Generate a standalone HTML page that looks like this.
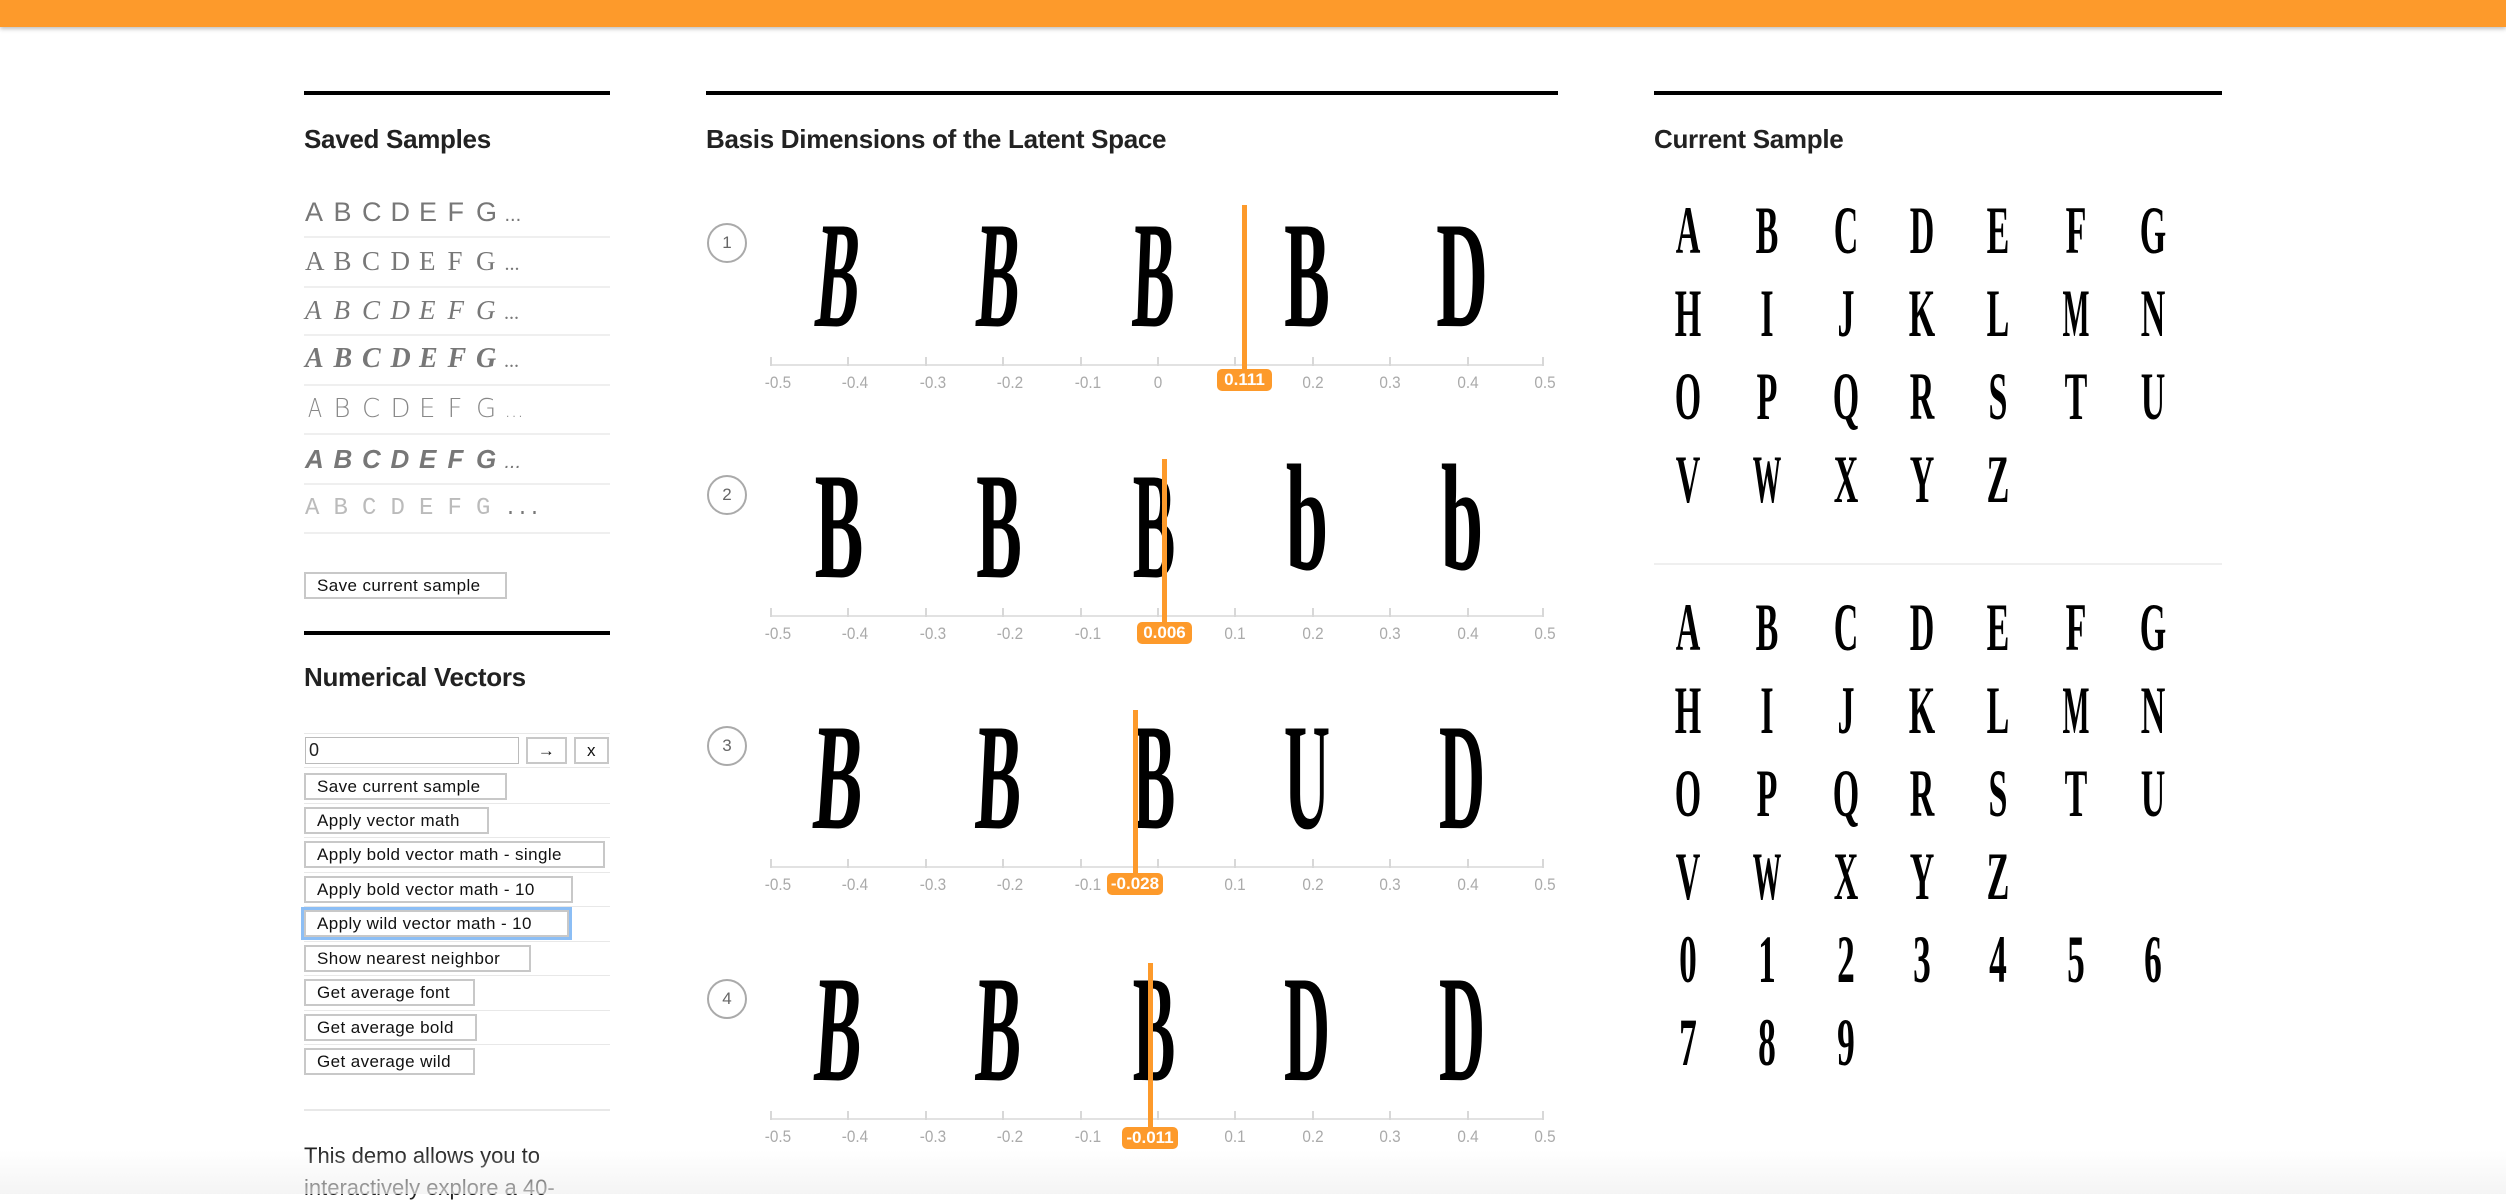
<!DOCTYPE html>
<html><head><meta charset="utf-8"><style>
*{margin:0;padding:0;box-sizing:border-box}
body{width:2506px;height:1194px;background:#fff;position:relative;overflow:hidden;font-family:"Liberation Sans",sans-serif;color:#222}
.abs{position:absolute}
.bar{left:0;top:0;width:2506px;height:27px;background:#fd9a2b;box-shadow:0 2px 4px rgba(0,0,0,.25)}
.rule{height:4px;background:#000}
h2{position:absolute;font-size:26px;font-weight:bold;color:#222;line-height:30px;letter-spacing:-0.3px}
.sep{height:2px;background:#efefef}
.row{position:absolute;left:305px;height:30px;color:#777;font-size:27px;line-height:30px;white-space:nowrap}
.row span{display:inline-block;width:28.5px}
.btn{position:absolute;height:27px;border:2px solid #c8c8c8;background:#fff;font-size:17px;line-height:23px;padding-left:11px;color:#111;letter-spacing:0.4px}
.ln{position:absolute;left:304px;width:306px;height:1px;background:#e8e8e8}
.circ{position:absolute;width:40px;height:40px;border:2px solid #aaa;border-radius:50%;font-size:17px;line-height:36px;text-align:center;color:#666}
.axis{position:absolute;left:770px;width:774px;height:2px;background:#e2e2e2}
.tick{position:absolute;width:2px;height:9px;background:#d8d8d8}
.tl{position:absolute;width:60px;text-align:center;font-size:17px;color:#aaa;transform:scaleX(.9)}
.g{position:absolute;width:200px;text-align:center;font-family:"Liberation Serif",serif;font-weight:bold;color:#000;line-height:1}
.c{font-size:68px;margin-top:-5px}
.mk{position:absolute;width:5px;background:#fd9a2b}
.lab{position:absolute;height:22px;background:#fd9a2b;border-radius:5px;color:#fff;font-weight:bold;font-size:17px;line-height:22px;text-align:center}
.fade{left:0;top:1150px;width:2506px;height:44px;background:linear-gradient(rgba(240,240,240,0),rgba(240,240,240,.7))}
</style></head><body>
<div class="abs bar"></div>

<div class="abs rule" style="left:304px;top:91px;width:306px"></div>
<h2 style="left:304px;top:124px">Saved Samples</h2>
<div class="row" style="top:197px;font-family:'Liberation Sans';font-weight:normal"><span>A</span><span>B</span><span>C</span><span>D</span><span>E</span><span>F</span><span>G</span><span style="font-size:20px">...</span></div>
<div class="sep abs" style="left:304px;top:236px;width:306px"></div>
<div class="row" style="top:246px;font-family:'Liberation Serif'"><span>A</span><span>B</span><span>C</span><span>D</span><span>E</span><span>F</span><span>G</span><span style="font-size:20px">...</span></div>
<div class="sep abs" style="left:304px;top:286px;width:306px"></div>
<div class="row" style="top:295px;font-family:'Liberation Serif';font-style:italic"><span>A</span><span>B</span><span>C</span><span>D</span><span>E</span><span>F</span><span>G</span><span style="font-size:20px">...</span></div>
<div class="sep abs" style="left:304px;top:334px;width:306px"></div>
<div class="row" style="top:344px;font-family:'Liberation Serif';font-style:italic;font-weight:bold;font-size:28px"><span>A</span><span>B</span><span>C</span><span>D</span><span>E</span><span>F</span><span>G</span><span style="font-size:20px;font-weight:normal">...</span></div>
<div class="sep abs" style="left:304px;top:384px;width:306px"></div>
<div class="row" style="top:394px;font-family:'DejaVu Sans';font-weight:200;color:#888;font-size:26px"><span style="transform:scaleX(.8)">A</span><span>B</span><span>C</span><span>D</span><span>E</span><span>F</span><span>G</span><span style="font-size:20px">...</span></div>
<div class="sep abs" style="left:304px;top:433px;width:306px"></div>
<div class="row" style="top:444px;font-family:'Liberation Sans';font-style:italic;font-weight:bold;font-size:26px"><span>A</span><span>B</span><span>C</span><span>D</span><span>E</span><span>F</span><span>G</span><span style="font-size:20px;font-weight:normal">...</span></div>
<div class="sep abs" style="left:304px;top:483px;width:306px"></div>
<div class="row" style="top:494px;font-family:'Liberation Mono';color:#bbb;font-size:24px"><span>A</span><span>B</span><span>C</span><span>D</span><span>E</span><span>F</span><span>G</span><span style="font-size:20px;color:#777">...</span></div>
<div class="sep abs" style="left:304px;top:532px;width:306px"></div>
<div class="btn" style="left:304px;top:572px;width:203px">Save current sample</div>

<div class="abs rule" style="left:304px;top:631px;width:306px"></div>
<h2 style="left:304px;top:662px">Numerical Vectors</h2>
<div class="ln" style="top:733px"></div>
<div class="abs" style="left:305px;top:737px;width:214px;height:27px;border:1px solid #bbb;font-size:18px;line-height:25px;padding-left:3px">0</div>
<div class="btn" style="left:526px;top:737px;width:41px;padding:0;text-align:center">→</div>
<div class="btn" style="left:574px;top:737px;width:35px;padding:0;text-align:center">x</div>
<div class="ln" style="top:767px"></div>
<div class="btn" style="left:304px;top:773px;width:203px">Save current sample</div>
<div class="ln" style="top:803px"></div>
<div class="btn" style="left:304px;top:807px;width:185px">Apply vector math</div>
<div class="ln" style="top:837px"></div>
<div class="btn" style="left:304px;top:841px;width:301px">Apply bold vector math - single</div>
<div class="ln" style="top:872px"></div>
<div class="btn" style="left:304px;top:876px;width:269px">Apply bold vector math - 10</div>
<div class="ln" style="top:906px"></div>
<div class="btn" style="left:304px;top:910px;width:265px;box-shadow:0 0 0 3px #8cbef5">Apply wild vector math - 10</div>
<div class="ln" style="top:941px"></div>
<div class="btn" style="left:304px;top:945px;width:227px">Show nearest neighbor</div>
<div class="ln" style="top:975px"></div>
<div class="btn" style="left:304px;top:979px;width:171px">Get average font</div>
<div class="ln" style="top:1010px"></div>
<div class="btn" style="left:304px;top:1014px;width:173px">Get average bold</div>
<div class="ln" style="top:1044px"></div>
<div class="btn" style="left:304px;top:1048px;width:171px">Get average wild</div>
<div class="ln" style="top:1109px;height:2px"></div>
<div class="abs" style="left:304px;top:1140px;font-size:22px;line-height:32px;color:#222">This demo allows you to<br>interactively explore a 40-</div>

<div class="abs rule" style="left:706px;top:91px;width:852px"></div>
<h2 style="left:706px;top:124px">Basis Dimensions of the Latent Space</h2>

<div class="circ" style="left:707px;top:223px">1</div>
<div class="circ" style="left:707px;top:475px">2</div>
<div class="circ" style="left:707px;top:726px">3</div>
<div class="circ" style="left:707px;top:979px">4</div>

<div class="axis" style="top:364px"></div>
<div class="axis" style="top:615px"></div>
<div class="axis" style="top:866px"></div>
<div class="axis" style="top:1118px"></div>

<div class="tick" style="left:770px;top:357px"></div><div class="tick" style="left:847px;top:357px"></div><div class="tick" style="left:925px;top:357px"></div><div class="tick" style="left:1002px;top:357px"></div><div class="tick" style="left:1080px;top:357px"></div><div class="tick" style="left:1157px;top:357px"></div><div class="tick" style="left:1234px;top:357px"></div><div class="tick" style="left:1312px;top:357px"></div><div class="tick" style="left:1389px;top:357px"></div><div class="tick" style="left:1467px;top:357px"></div><div class="tick" style="left:1542px;top:357px"></div>
<div class="tick" style="left:770px;top:608px"></div><div class="tick" style="left:847px;top:608px"></div><div class="tick" style="left:925px;top:608px"></div><div class="tick" style="left:1002px;top:608px"></div><div class="tick" style="left:1080px;top:608px"></div><div class="tick" style="left:1157px;top:608px"></div><div class="tick" style="left:1234px;top:608px"></div><div class="tick" style="left:1312px;top:608px"></div><div class="tick" style="left:1389px;top:608px"></div><div class="tick" style="left:1467px;top:608px"></div><div class="tick" style="left:1542px;top:608px"></div>
<div class="tick" style="left:770px;top:859px"></div><div class="tick" style="left:847px;top:859px"></div><div class="tick" style="left:925px;top:859px"></div><div class="tick" style="left:1002px;top:859px"></div><div class="tick" style="left:1080px;top:859px"></div><div class="tick" style="left:1157px;top:859px"></div><div class="tick" style="left:1234px;top:859px"></div><div class="tick" style="left:1312px;top:859px"></div><div class="tick" style="left:1389px;top:859px"></div><div class="tick" style="left:1467px;top:859px"></div><div class="tick" style="left:1542px;top:859px"></div>
<div class="tick" style="left:770px;top:1111px"></div><div class="tick" style="left:847px;top:1111px"></div><div class="tick" style="left:925px;top:1111px"></div><div class="tick" style="left:1002px;top:1111px"></div><div class="tick" style="left:1080px;top:1111px"></div><div class="tick" style="left:1157px;top:1111px"></div><div class="tick" style="left:1234px;top:1111px"></div><div class="tick" style="left:1312px;top:1111px"></div><div class="tick" style="left:1389px;top:1111px"></div><div class="tick" style="left:1467px;top:1111px"></div><div class="tick" style="left:1542px;top:1111px"></div>

<div class="tl" style="left:748px;top:373px">-0.5</div><div class="tl" style="left:825px;top:373px">-0.4</div><div class="tl" style="left:903px;top:373px">-0.3</div><div class="tl" style="left:980px;top:373px">-0.2</div><div class="tl" style="left:1058px;top:373px">-0.1</div><div class="tl" style="left:1128px;top:373px">0</div><div class="tl" style="left:1205px;top:373px">0.1</div><div class="tl" style="left:1283px;top:373px">0.2</div><div class="tl" style="left:1360px;top:373px">0.3</div><div class="tl" style="left:1438px;top:373px">0.4</div><div class="tl" style="left:1515px;top:373px">0.5</div>
<div class="tl" style="left:748px;top:624px">-0.5</div><div class="tl" style="left:825px;top:624px">-0.4</div><div class="tl" style="left:903px;top:624px">-0.3</div><div class="tl" style="left:980px;top:624px">-0.2</div><div class="tl" style="left:1058px;top:624px">-0.1</div><div class="tl" style="left:1128px;top:624px">0</div><div class="tl" style="left:1205px;top:624px">0.1</div><div class="tl" style="left:1283px;top:624px">0.2</div><div class="tl" style="left:1360px;top:624px">0.3</div><div class="tl" style="left:1438px;top:624px">0.4</div><div class="tl" style="left:1515px;top:624px">0.5</div>
<div class="tl" style="left:748px;top:875px">-0.5</div><div class="tl" style="left:825px;top:875px">-0.4</div><div class="tl" style="left:903px;top:875px">-0.3</div><div class="tl" style="left:980px;top:875px">-0.2</div><div class="tl" style="left:1058px;top:875px">-0.1</div><div class="tl" style="left:1128px;top:875px">0</div><div class="tl" style="left:1205px;top:875px">0.1</div><div class="tl" style="left:1283px;top:875px">0.2</div><div class="tl" style="left:1360px;top:875px">0.3</div><div class="tl" style="left:1438px;top:875px">0.4</div><div class="tl" style="left:1515px;top:875px">0.5</div>
<div class="tl" style="left:748px;top:1127px">-0.5</div><div class="tl" style="left:825px;top:1127px">-0.4</div><div class="tl" style="left:903px;top:1127px">-0.3</div><div class="tl" style="left:980px;top:1127px">-0.2</div><div class="tl" style="left:1058px;top:1127px">-0.1</div><div class="tl" style="left:1128px;top:1127px">0</div><div class="tl" style="left:1205px;top:1127px">0.1</div><div class="tl" style="left:1283px;top:1127px">0.2</div><div class="tl" style="left:1360px;top:1127px">0.3</div><div class="tl" style="left:1438px;top:1127px">0.4</div><div class="tl" style="left:1515px;top:1127px">0.5</div>

<div class="g" style="left:739px;top:199px;font-size:152px;transform:scaleX(.42) skewX(-12deg)">B</div>
<div class="g" style="left:899px;top:199px;font-size:152px;transform:scaleX(.42) skewX(-9deg)">B</div>
<div class="g" style="left:1054px;top:199px;font-size:152px;transform:scaleX(.42) skewX(-5deg)">B</div>
<div class="g" style="left:1207px;top:199px;font-size:152px;transform:scaleX(.45)">B</div>
<div class="g" style="left:1362px;top:199px;font-size:152px;transform:scaleX(.47)">D</div>

<div class="g" style="left:739px;top:450px;font-size:152px;transform:scaleX(.48)">B</div>
<div class="g" style="left:899px;top:450px;font-size:152px;transform:scaleX(.45)">B</div>
<div class="g" style="left:1054px;top:450px;font-size:152px;transform:scaleX(.42)">B</div>
<div class="g" style="left:1207px;top:442px;font-size:152px;transform:scaleX(.5)">b</div>
<div class="g" style="left:1362px;top:442px;font-size:152px;transform:scaleX(.5)">b</div>

<div class="g" style="left:739px;top:701px;font-size:152px;transform:scaleX(.48) skewX(-8deg)">B</div>
<div class="g" style="left:899px;top:701px;font-size:152px;transform:scaleX(.45) skewX(-6deg)">B</div>
<div class="g" style="left:1054px;top:701px;font-size:152px;transform:scaleX(.42)">B</div>
<div class="g" style="left:1207px;top:701px;font-size:152px;transform:scaleX(.42)">U</div>
<div class="g" style="left:1362px;top:701px;font-size:152px;transform:scaleX(.42)">D</div>

<div class="g" style="left:739px;top:953px;font-size:152px;transform:scaleX(.46) skewX(-8deg)">B</div>
<div class="g" style="left:899px;top:953px;font-size:152px;transform:scaleX(.45) skewX(-6deg)">B</div>
<div class="g" style="left:1054px;top:953px;font-size:152px;transform:scaleX(.42)">B</div>
<div class="g" style="left:1207px;top:953px;font-size:152px;transform:scaleX(.42)">D</div>
<div class="g" style="left:1362px;top:953px;font-size:152px;transform:scaleX(.42)">D</div>

<div class="mk" style="left:1242px;top:205px;height:168px"></div>
<div class="lab" style="left:1217px;top:369px;width:55px">0.111</div>
<div class="mk" style="left:1162px;top:459px;height:165px"></div>
<div class="lab" style="left:1137px;top:622px;width:55px">0.006</div>
<div class="mk" style="left:1133px;top:710px;height:165px"></div>
<div class="lab" style="left:1107px;top:873px;width:56px">-0.028</div>
<div class="mk" style="left:1148px;top:963px;height:165px"></div>
<div class="lab" style="left:1122px;top:1127px;width:56px">-0.011</div>

<div class="abs rule" style="left:1654px;top:91px;width:568px"></div>
<h2 style="left:1654px;top:124px">Current Sample</h2>

<div class="g c" style="left:1588px;top:201px;transform:scaleX(.5)">A</div>
<div class="g c" style="left:1667px;top:201px;transform:scaleX(.5)">B</div>
<div class="g c" style="left:1746px;top:201px;transform:scaleX(.5)">C</div>
<div class="g c" style="left:1822px;top:201px;transform:scaleX(.5)">D</div>
<div class="g c" style="left:1898px;top:201px;transform:scaleX(.5)">E</div>
<div class="g c" style="left:1976px;top:201px;transform:scaleX(.5)">F</div>
<div class="g c" style="left:2053px;top:201px;transform:scaleX(.5)">G</div>
<div class="g c" style="left:1588px;top:284px;transform:scaleX(.5)">H</div>
<div class="g c" style="left:1667px;top:284px;transform:scaleX(.5)">I</div>
<div class="g c" style="left:1746px;top:284px;transform:scaleX(.5)">J</div>
<div class="g c" style="left:1822px;top:284px;transform:scaleX(.5)">K</div>
<div class="g c" style="left:1898px;top:284px;transform:scaleX(.5)">L</div>
<div class="g c" style="left:1976px;top:284px;transform:scaleX(.42)">M</div>
<div class="g c" style="left:2053px;top:284px;transform:scaleX(.5)">N</div>
<div class="g c" style="left:1588px;top:367px;transform:scaleX(.5)">O</div>
<div class="g c" style="left:1667px;top:367px;transform:scaleX(.5)">P</div>
<div class="g c" style="left:1746px;top:367px;transform:scaleX(.5)">Q</div>
<div class="g c" style="left:1822px;top:367px;transform:scaleX(.5)">R</div>
<div class="g c" style="left:1898px;top:367px;transform:scaleX(.5)">S</div>
<div class="g c" style="left:1976px;top:367px;transform:scaleX(.5)">T</div>
<div class="g c" style="left:2053px;top:367px;transform:scaleX(.5)">U</div>
<div class="g c" style="left:1588px;top:450px;transform:scaleX(.5)">V</div>
<div class="g c" style="left:1667px;top:450px;transform:scaleX(.42)">W</div>
<div class="g c" style="left:1746px;top:450px;transform:scaleX(.5)">X</div>
<div class="g c" style="left:1822px;top:450px;transform:scaleX(.5)">Y</div>
<div class="g c" style="left:1898px;top:450px;transform:scaleX(.5)">Z</div>

<div class="sep abs" style="left:1654px;top:563px;width:568px"></div>

<div class="g c" style="left:1588px;top:598px;transform:scaleX(.5)">A</div>
<div class="g c" style="left:1667px;top:598px;transform:scaleX(.5)">B</div>
<div class="g c" style="left:1746px;top:598px;transform:scaleX(.5)">C</div>
<div class="g c" style="left:1822px;top:598px;transform:scaleX(.5)">D</div>
<div class="g c" style="left:1898px;top:598px;transform:scaleX(.5)">E</div>
<div class="g c" style="left:1976px;top:598px;transform:scaleX(.5)">F</div>
<div class="g c" style="left:2053px;top:598px;transform:scaleX(.5)">G</div>
<div class="g c" style="left:1588px;top:681px;transform:scaleX(.5)">H</div>
<div class="g c" style="left:1667px;top:681px;transform:scaleX(.5)">I</div>
<div class="g c" style="left:1746px;top:681px;transform:scaleX(.5)">J</div>
<div class="g c" style="left:1822px;top:681px;transform:scaleX(.5)">K</div>
<div class="g c" style="left:1898px;top:681px;transform:scaleX(.5)">L</div>
<div class="g c" style="left:1976px;top:681px;transform:scaleX(.42)">M</div>
<div class="g c" style="left:2053px;top:681px;transform:scaleX(.5)">N</div>
<div class="g c" style="left:1588px;top:764px;transform:scaleX(.5)">O</div>
<div class="g c" style="left:1667px;top:764px;transform:scaleX(.5)">P</div>
<div class="g c" style="left:1746px;top:764px;transform:scaleX(.5)">Q</div>
<div class="g c" style="left:1822px;top:764px;transform:scaleX(.5)">R</div>
<div class="g c" style="left:1898px;top:764px;transform:scaleX(.5)">S</div>
<div class="g c" style="left:1976px;top:764px;transform:scaleX(.5)">T</div>
<div class="g c" style="left:2053px;top:764px;transform:scaleX(.5)">U</div>
<div class="g c" style="left:1588px;top:847px;transform:scaleX(.5)">V</div>
<div class="g c" style="left:1667px;top:847px;transform:scaleX(.42)">W</div>
<div class="g c" style="left:1746px;top:847px;transform:scaleX(.5)">X</div>
<div class="g c" style="left:1822px;top:847px;transform:scaleX(.5)">Y</div>
<div class="g c" style="left:1898px;top:847px;transform:scaleX(.5)">Z</div>
<div class="g c" style="left:1588px;top:930px;transform:scaleX(.52)">0</div>
<div class="g c" style="left:1667px;top:930px;transform:scaleX(.52)">1</div>
<div class="g c" style="left:1746px;top:930px;transform:scaleX(.52)">2</div>
<div class="g c" style="left:1822px;top:930px;transform:scaleX(.52)">3</div>
<div class="g c" style="left:1898px;top:930px;transform:scaleX(.52)">4</div>
<div class="g c" style="left:1976px;top:930px;transform:scaleX(.52)">5</div>
<div class="g c" style="left:2053px;top:930px;transform:scaleX(.52)">6</div>
<div class="g c" style="left:1588px;top:1013px;transform:scaleX(.52)">7</div>
<div class="g c" style="left:1667px;top:1013px;transform:scaleX(.52)">8</div>
<div class="g c" style="left:1746px;top:1013px;transform:scaleX(.52)">9</div>

<div class="abs fade"></div>
</body></html>
